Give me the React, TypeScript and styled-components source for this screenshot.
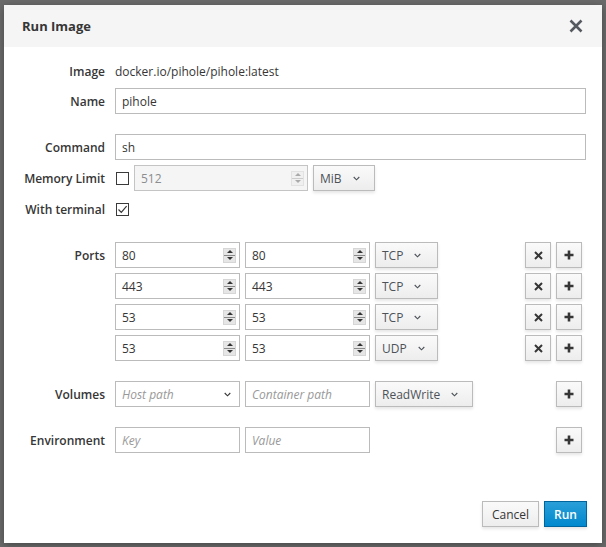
import React from "react";
import styled, { createGlobalStyle } from "styled-components";

const GlobalStyle = createGlobalStyle`
  html, body { margin: 0; padding: 0; }
  body {
    width: 606px; height: 547px; overflow: hidden;
    background: #6b6b6b;
    font-family: "Open Sans", "Liberation Sans", sans-serif;
    color: #363636;
  }
  * { box-sizing: border-box; }
`;

const Backdrop = styled.div`
  width: 606px;
  height: 547px;
  padding: 5px 4px 4px 4px;
  background: #6b6b6b;
`;

const Modal = styled.div`
  width: 598px;
  height: 538px;
  background: #fff;
  display: flex;
  flex-direction: column;
  box-shadow: 0 2px 8px rgba(0, 0, 0, 0.35);
`;

const Header = styled.div`
  height: 42px;
  flex: none;
  background: #f5f5f5;
  display: flex;
  align-items: center;
  justify-content: space-between;
  padding: 0 19px 0 18px;
`;

const Title = styled.h4`
  margin: 0;
  font-size: 13px;
  font-weight: 700;
  color: #363636;
`;

const CloseBtn = styled.span`
  display: flex;
  width: 14px;
  height: 14px;
`;

const Body = styled.div`
  padding: 11px 16px 0 0;
  display: flex;
  flex-direction: column;
`;

const Row = styled.div<{ $mt: number; $h?: number }>`
  display: grid;
  grid-template-columns: 101px 1fr;
  column-gap: 10px;
  align-items: center;
  margin-top: ${(p) => p.$mt}px;
  min-height: ${(p) => p.$h ?? 26}px;
`;

const Label = styled.label`
  text-align: right;
  font-size: 12px;
  font-weight: 600;
  color: #363636;
  white-space: nowrap;
`;

const Static = styled.span`
  font-size: 12px;
  color: #363636;
`;

const Fields = styled.div`
  display: flex;
  align-items: center;
  gap: 5px;
`;

const TextInput = styled.input<{ $w?: number }>`
  height: 26px;
  width: ${(p) => (p.$w ? `${p.$w}px` : "100%")};
  flex: none;
  border: 1px solid #bbb;
  background: #fff;
  padding: 2px 6px;
  font-family: inherit;
  font-size: 12px;
  color: #363636;
  outline: none;
  &::placeholder { color: #999; font-style: italic; }
`;

const NumberBox = styled.div<{ $w: number; $disabled?: boolean }>`
  height: 26px;
  width: ${(p) => p.$w}px;
  flex: none;
  display: flex;
  align-items: center;
  border: 1px solid ${(p) => (p.$disabled ? "#c4c4c4" : "#bbb")};
  background: ${(p) => (p.$disabled ? "#f5f5f5" : "#fff")};
  padding: 0 3px 0 6px;
`;

const NumberText = styled.span<{ $disabled?: boolean }>`
  flex: 1;
  font-size: 12px;
  color: ${(p) => (p.$disabled ? "#8b8d8f" : "#363636")};
`;

const Spinner = styled.span<{ $disabled?: boolean }>`
  width: 13px;
  height: 15px;
  display: flex;
  flex-direction: column;
  background: ${(p) => (p.$disabled ? "#f0f0f0" : "#e6e6e6")};
  border: 1px solid ${(p) => (p.$disabled ? "#e2e2e2" : "#d6d6d6")};
`;

const SpinHalf = styled.span<{ $down?: boolean; $disabled?: boolean }>`
  flex: 1;
  display: flex;
  align-items: center;
  justify-content: center;
  border-top: ${(p) => (p.$down ? `1px solid ${p.$disabled ? "#ccc" : "#8a8a8a"}` : "none")};
  &::after {
    content: "";
    width: 0;
    height: 0;
    border-left: 3px solid transparent;
    border-right: 3px solid transparent;
    ${(p) =>
      p.$down
        ? `border-top: 3px solid ${p.$disabled ? "#aaa" : "#333"};`
        : `border-bottom: 3px solid ${p.$disabled ? "#aaa" : "#333"};`}
  }
`;

const DropButton = styled.button<{ $w: number }>`
  height: 26px;
  width: ${(p) => p.$w}px;
  flex: none;
  display: flex;
  align-items: center;
  gap: 11px;
  padding: 0 6px;
  border: 1px solid #bbb;
  background: linear-gradient(to bottom, #fafafa 0%, #ededed 100%);
  box-shadow: 0 2px 3px rgba(3, 3, 3, 0.1);
  font-family: inherit;
  font-size: 12px;
  color: #4d5258;
  cursor: pointer;
`;

const SelectBox = styled.div<{ $w: number }>`
  height: 26px;
  width: ${(p) => p.$w}px;
  flex: none;
  display: flex;
  align-items: center;
  justify-content: space-between;
  padding: 0 8px 0 6px;
  border: 1px solid #bbb;
  background: #fff;
  font-size: 12px;
  font-style: italic;
  color: #999;
`;

const Spacer = styled.span`
  flex: 1;
`;

const IconButton = styled.button`
  width: 26px;
  height: 26px;
  flex: none;
  display: flex;
  align-items: center;
  justify-content: center;
  padding: 0;
  border: 1px solid #bbb;
  background: linear-gradient(to bottom, #fafafa 0%, #ededed 100%);
  box-shadow: 0 2px 3px rgba(3, 3, 3, 0.1);
  cursor: pointer;
`;

const ButtonGroup = styled.div`
  display: flex;
  gap: 5px;
  margin-right: 4px;
`;

const Check = styled.span`
  width: 13px;
  height: 13px;
  flex: none;
  display: flex;
  align-items: center;
  justify-content: center;
  border: 1px solid #3a3a3a;
  background: #fff;
  margin-left: 1px;
`;

const Footer = styled.div`
  margin-top: auto;
  display: flex;
  justify-content: flex-end;
  gap: 5px;
  padding: 0 15px 16px 0;
`;

const FooterButton = styled.button<{ $primary?: boolean }>`
  height: 26px;
  padding: 0 9px;
  font-family: inherit;
  font-size: 12px;
  font-weight: ${(p) => (p.$primary ? 600 : 400)};
  color: ${(p) => (p.$primary ? "#fff" : "#363636")};
  border: 1px solid ${(p) => (p.$primary ? "#00659c" : "#bbb")};
  background: ${(p) =>
    p.$primary
      ? "linear-gradient(to bottom, #2a9fd8 0%, #0088ce 100%)"
      : "linear-gradient(to bottom, #fafafa 0%, #ededed 100%)"};
  box-shadow: 0 2px 3px rgba(3, 3, 3, 0.1);
  cursor: pointer;
`;

const Chevron = ({ color = "#4d5258" }: { color?: string }) => (
  <svg width="7" height="5" viewBox="0 0 7 5">
    <path d="M0.7 1 L3.5 3.8 L6.3 1" fill="none" stroke={color} strokeWidth="1.1" />
  </svg>
);

const TimesIcon = () => (
  <svg width="9" height="9" viewBox="0 0 9 9">
    <path d="M1 1 L8 8 M8 1 L1 8" stroke="#363636" strokeWidth="2" />
  </svg>
);

const PlusIcon = () => (
  <svg width="10" height="10" viewBox="0 0 10 10">
    <path d="M5 0.5 V9.5 M0.5 5 H9.5" stroke="#363636" strokeWidth="2.6" />
  </svg>
);

const CloseIcon = () => (
  <svg width="14" height="14" viewBox="0 0 14 14">
    <path d="M1.5 1.5 L12.5 12.5 M12.5 1.5 L1.5 12.5" stroke="#555a60" strokeWidth="2.6" />
  </svg>
);

const CheckMark = () => (
  <svg width="11" height="11" viewBox="0 0 11 11">
    <path d="M1.5 5.5 L4.3 8.3 L9.6 2.2" fill="none" stroke="#363636" strokeWidth="1.2" />
  </svg>
);

const NumberField = ({ value, w, disabled }: { value: string; w: number; disabled?: boolean }) => (
  <NumberBox $w={w} $disabled={disabled}>
    <NumberText $disabled={disabled}>{value}</NumberText>
    <Spinner $disabled={disabled}>
      <SpinHalf $disabled={disabled} />
      <SpinHalf $down $disabled={disabled} />
    </Spinner>
  </NumberBox>
);

const ports = [
  { host: "80", container: "80", proto: "TCP" },
  { host: "443", container: "443", proto: "TCP" },
  { host: "53", container: "53", proto: "TCP" },
  { host: "53", container: "53", proto: "UDP" },
];

export default function App() {
  return (
    <>
      <GlobalStyle />
      <Backdrop>
        <Modal>
          <Header>
            <Title>Run Image</Title>
            <CloseBtn>
              <CloseIcon />
            </CloseBtn>
          </Header>
          <Body>
            <Row $mt={0}>
              <Label>Image</Label>
              <Static>docker.io/pihole/pihole:latest</Static>
            </Row>
            <Row $mt={4}>
              <Label>Name</Label>
              <TextInput defaultValue="pihole" />
            </Row>
            <Row $mt={20}>
              <Label>Command</Label>
              <TextInput defaultValue="sh" />
            </Row>
            <Row $mt={5}>
              <Label>Memory Limit</Label>
              <Fields>
                <Check />
                <NumberField value="512" w={174} disabled />
                <DropButton $w={62}>
                  MiB <Chevron />
                </DropButton>
              </Fields>
            </Row>
            <Row $mt={5}>
              <Label>With terminal</Label>
              <Fields>
                <Check>
                  <CheckMark />
                </Check>
              </Fields>
            </Row>
            {ports.map((p, i) => (
              <Row key={i} $mt={i === 0 ? 20 : 5}>
                <Label>{i === 0 ? "Ports" : ""}</Label>
                <Fields>
                  <NumberField value={p.host} w={125} />
                  <NumberField value={p.container} w={125} />
                  <DropButton $w={63}>
                    {p.proto} <Chevron />
                  </DropButton>
                  <Spacer />
                  <ButtonGroup>
                    <IconButton>
                      <TimesIcon />
                    </IconButton>
                    <IconButton>
                      <PlusIcon />
                    </IconButton>
                  </ButtonGroup>
                </Fields>
              </Row>
            ))}
            <Row $mt={20}>
              <Label>Volumes</Label>
              <Fields>
                <SelectBox $w={125}>
                  Host path <Chevron color="#363636" />
                </SelectBox>
                <TextInput $w={125} placeholder="Container path" />
                <DropButton $w={98}>
                  ReadWrite <Chevron />
                </DropButton>
                <Spacer />
                <ButtonGroup>
                  <IconButton>
                    <PlusIcon />
                  </IconButton>
                </ButtonGroup>
              </Fields>
            </Row>
            <Row $mt={20}>
              <Label>Environment</Label>
              <Fields>
                <TextInput $w={125} placeholder="Key" />
                <TextInput $w={125} placeholder="Value" />
                <Spacer />
                <ButtonGroup>
                  <IconButton>
                    <PlusIcon />
                  </IconButton>
                </ButtonGroup>
              </Fields>
            </Row>
          </Body>
          <Footer>
            <FooterButton>Cancel</FooterButton>
            <FooterButton $primary>Run</FooterButton>
          </Footer>
        </Modal>
      </Backdrop>
    </>
  );
}
